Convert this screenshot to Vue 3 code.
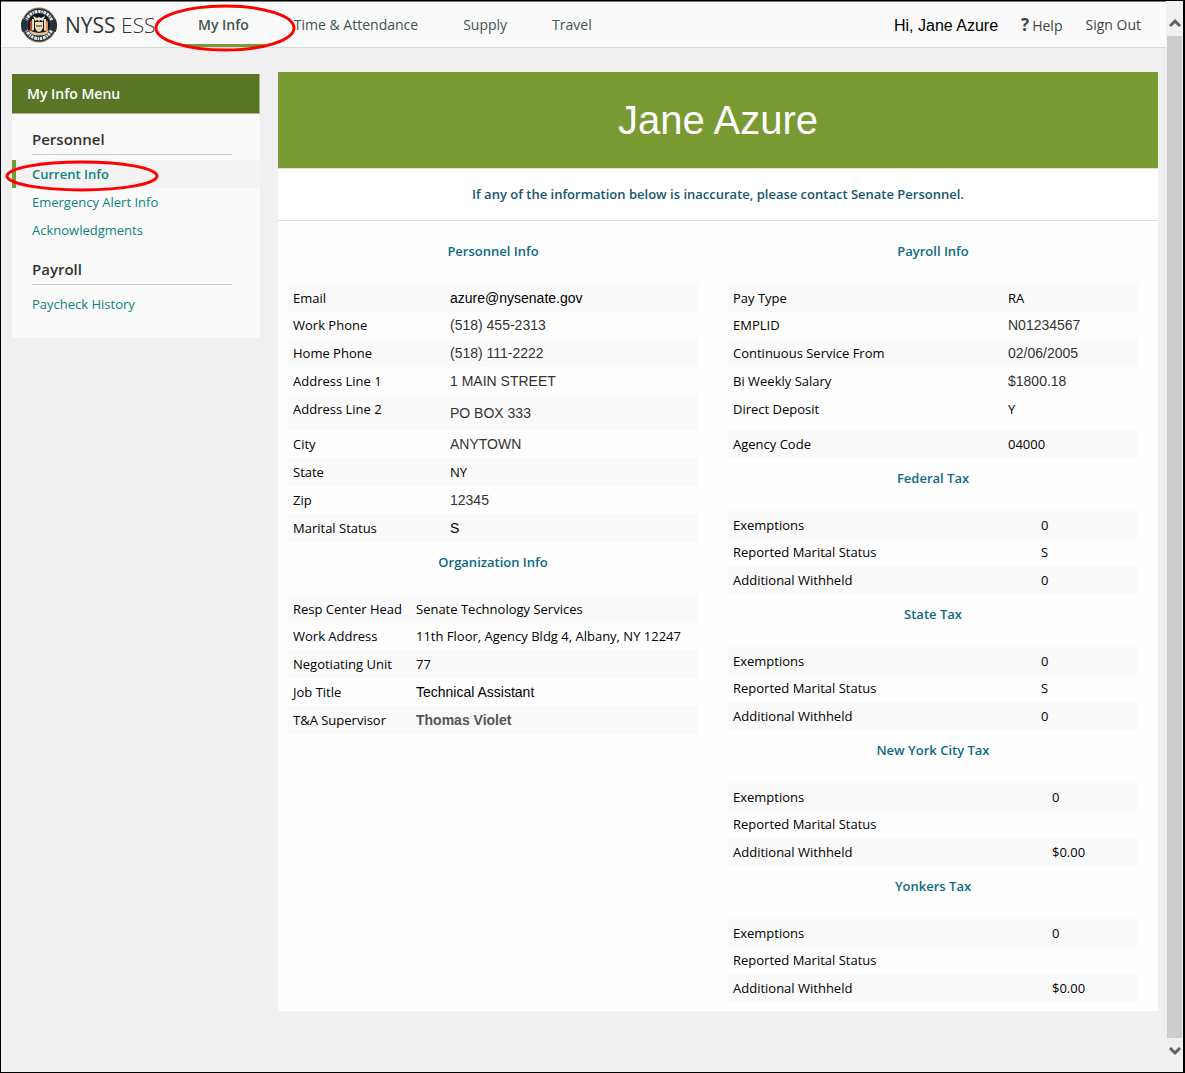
<script setup>
const nav = [
  { label: 'My Info', active: true },
  { label: 'Time & Attendance' },
  { label: 'Supply' },
  { label: 'Travel' }
]

const menu = [
  {
    title: 'Personnel',
    links: [
      { label: 'Current Info', active: true },
      { label: 'Emergency Alert Info' },
      { label: 'Acknowledgments' }
    ]
  },
  { title: 'Payroll', links: [{ label: 'Paycheck History' }] }
]

const columns = [
  [
    {
      title: 'Personnel Info',
      size: 'personal',
      rows: [
        { label: 'Email', value: 'azure@nysenate.gov', tone: 'alt' },
        { label: 'Work Phone', value: '(518) 455-2313', tone: 'alt soft' },
        { label: 'Home Phone', value: '(518) 111-2222', tone: 'alt soft' },
        { label: 'Address Line 1', value: '1 MAIN STREET', tone: 'alt soft' },
        { label: 'Address Line 2', value: 'PO BOX 333', tone: 'alt soft', tall: true },
        { label: 'City', value: 'ANYTOWN', tone: 'alt soft', plain: true },
        { label: 'State', value: 'NY', striped: true },
        { label: 'Zip', value: '12345', tone: 'alt soft', plain: true },
        { label: 'Marital Status', value: 'S', tone: 'alt', striped: true }
      ]
    },
    {
      title: 'Organization Info',
      size: 'organization',
      rows: [
        { label: 'Resp Center Head', value: 'Senate Technology Services' },
        { label: 'Work Address', value: '11th Floor, Agency Bldg 4, Albany, NY 12247' },
        { label: 'Negotiating Unit', value: '77' },
        { label: 'Job Title', value: 'Technical Assistant', tone: 'alt' },
        { label: 'T&A Supervisor', value: 'Thomas Violet', tone: 'alt strong' }
      ]
    }
  ],
  [
    {
      title: 'Payroll Info',
      size: 'payroll',
      rows: [
        { label: 'Pay Type', value: 'RA' },
        { label: 'EMPLID', value: 'N01234567', tone: 'alt soft' },
        { label: 'Continuous Service From', value: '02/06/2005', tone: 'alt soft' },
        { label: 'Bi Weekly Salary', value: '$1800.18', tone: 'alt soft' },
        { label: 'Direct Deposit', value: 'Y', tall: true, plain: true, top: true },
        { label: 'Agency Code', value: '04000', striped: true }
      ]
    },
    {
      title: 'Federal Tax',
      size: 'tax',
      rows: [
        { label: 'Exemptions', value: '0' },
        { label: 'Reported Marital Status', value: 'S' },
        { label: 'Additional Withheld', value: '0' }
      ]
    },
    {
      title: 'State Tax',
      size: 'tax',
      rows: [
        { label: 'Exemptions', value: '0' },
        { label: 'Reported Marital Status', value: 'S' },
        { label: 'Additional Withheld', value: '0' }
      ]
    },
    {
      title: 'New York City Tax',
      size: 'local',
      rows: [
        { label: 'Exemptions', value: '0' },
        { label: 'Reported Marital Status', value: '' },
        { label: 'Additional Withheld', value: '$0.00' }
      ]
    },
    {
      title: 'Yonkers Tax',
      size: 'local',
      rows: [
        { label: 'Exemptions', value: '0' },
        { label: 'Reported Marital Status', value: '' },
        { label: 'Additional Withheld', value: '$0.00' }
      ]
    }
  ]
]

const isStriped = (row, index) => row.striped || (!row.plain && index % 2 === 0)
</script>

<template>
  <div class="frame">
    <div class="page">
      <header class="topbar">
        <a class="brand" href="#">
          <svg class="seal" viewBox="0 0 36 36" aria-hidden="true">
            <circle cx="18" cy="18" r="17.5" fill="#9a8455" />
            <circle cx="18" cy="18" r="16.5" fill="#26333f" />
            <circle cx="18" cy="18" r="13.6" fill="none" stroke="#e4e6e2" stroke-width="3" stroke-dasharray="2.4 .8 1.4 .7 2.8 .9" pathLength="85" />
            <path d="M4 13q-2 5 0 11M32 13q2 5 0 11" fill="none" stroke="#26333f" stroke-width="6" />
            <circle cx="18" cy="18" r="11" fill="#11171c" />
            <path d="M8 23q10 6 20 0l-2 4q-8 3-16 0z" fill="#d9c79b" />
            <path d="M9 15l2-2 2 3v8H9z" fill="#b9452e" />
            <path d="M23 16l2-3 2 2v9h-4z" fill="#d58a57" />
            <path d="M11 12h2v11h-2zM23 12h2v11h-2z" fill="#e8d7b5" />
            <path d="M14 15h8v6q-1 3-4 4-3-1-4-4z" fill="#e6ddbd" />
            <path d="M15 18h6v2h-6z" fill="#b57a35" />
            <path d="M12 9l4 2 2-1 2 1 4-2-2 5-3-1-1 2-1-2-3 1z" fill="#e9e4d3" />
          </svg>
          <span class="brand-name">NYSS <span class="brand-light">ESS</span></span>
        </a>
        <nav class="nav" aria-label="Main">
          <a v-for="item in nav" :key="item.label" href="#" class="nav-link" :class="{ active: item.active }">
            {{ item.label }}
            <svg v-if="item.active" class="ring ring-nav" viewBox="0 0 142 48" aria-hidden="true">
              <ellipse cx="71" cy="24" rx="69" ry="22" />
            </svg>
          </a>
        </nav>
        <div class="account">
          <span class="greeting">Hi, Jane Azure</span>
          <a class="help" href="#"><b>?</b>Help</a>
          <a class="sign-out" href="#">Sign Out</a>
        </div>
      </header>

      <div class="body">
        <aside class="sidebar">
          <h2>My Info Menu</h2>
          <section v-for="group in menu" :key="group.title">
            <h3>{{ group.title }}</h3>
            <ul>
              <li v-for="link in group.links" :key="link.label" :class="{ active: link.active }">
                <a href="#">{{ link.label }}</a>
                <svg v-if="link.active" class="ring ring-menu" viewBox="0 0 154 32" aria-hidden="true">
                  <ellipse cx="77" cy="16" rx="75" ry="14" />
                </svg>
              </li>
            </ul>
          </section>
        </aside>

        <main class="content">
          <h1>Jane Azure</h1>
          <p class="notice">If any of the information below is inaccurate, please contact Senate Personnel.</p>
          <div class="columns">
            <div v-for="(column, c) in columns" :key="c" class="column">
              <section v-for="block in column" :key="block.title">
                <h4>{{ block.title }}</h4>
                <table :class="block.size">
                  <tbody>
                    <tr
                      v-for="(row, i) in block.rows"
                      :key="row.label"
                      :class="{ striped: isStriped(row, i), tall: row.tall, top: row.top }"
                    >
                      <th scope="row">{{ row.label }}</th>
                      <td :class="row.tone">{{ row.value }}</td>
                    </tr>
                  </tbody>
                </table>
              </section>
            </div>
          </div>
        </main>
      </div>
    </div>

    <div class="scrollbar">
      <button type="button" aria-label="Scroll up">
        <svg viewBox="0 0 12 10"><path d="M1 8l5-5 5 5" /></svg>
      </button>
      <div class="thumb"></div>
      <button type="button" aria-label="Scroll down">
        <svg viewBox="0 0 12 10"><path d="M1 2l5 5 5-5" /></svg>
      </button>
    </div>
  </div>
</template>

<style>
body {
  margin: 0;
  background: #f0f0f0;
}
</style>

<style scoped>
* {
  box-sizing: border-box;
}

.frame {
  display: flex;
  min-height: 100vh;
  border: 1px solid #000;
  border-right-width: 2px;
  background: #f0f0f0;
  font-family: "Open Sans", sans-serif;
  font-size: 13px;
  color: #000;
}

.page {
  flex: 1;
  min-width: 0;
}

a {
  color: inherit;
  text-decoration: none;
}

.topbar {
  display: flex;
  height: 47px;
  padding: 0 25px 0 20px;
  border-top: 1px solid #777;
  border-bottom: 1px solid #d8d8d8;
  background: #fafafa;
  font-size: 14px;
}

.brand {
  display: flex;
  align-items: center;
  gap: 8px;
  width: 161px;
  color: #333;
  white-space: nowrap;
}

.seal {
  width: 36px;
  height: 36px;
}

.brand-name {
  font-size: 21px;
  line-height: 44px;
}

.brand-light {
  font-weight: 300;
}

.nav {
  display: flex;
  flex: 1;
  gap: 13px;
  color: #43544f;
}

.nav-link {
  position: relative;
  padding: 0 16px;
  line-height: 45px;
  white-space: nowrap;
}

.nav-link.active {
  border-bottom: 3px solid #799933;
  font-weight: 600;
}

.ring {
  position: absolute;
  z-index: 1;
  fill: none;
  stroke: #ff0000;
  stroke-width: 3;
  pointer-events: none;
}

.ring-nav {
  top: 2px;
  left: -28px;
  width: 142px;
  height: 48px;
}

.ring-menu {
  top: 0;
  left: -11px;
  width: 154px;
  height: 32px;
}

.account {
  display: flex;
  gap: 23px;
  line-height: 45px;
  color: #444;
  white-space: nowrap;
}

.greeting {
  font: 16px/48px "Liberation Sans", sans-serif;
  color: #000;
}

.help b {
  margin-right: 3px;
  font-size: 17px;
}

.body {
  display: flex;
  align-items: flex-start;
  gap: 18px;
  padding: 24px 8px 24px 11px;
}

.sidebar {
  width: 248px;
  margin-top: 2px;
  padding-bottom: 20px;
  background: #fafafa;
}

.sidebar h2 {
  margin: 0;
  padding-left: 15px;
  border-right: 1px solid #a8b988;
  border-bottom: 1px solid #a8b988;
  background: #5b7526;
  color: #fff;
  font-size: 14px;
  font-weight: 600;
  line-height: 39px;
}

.sidebar h3 {
  margin: 0 28px 5px 20px;
  padding: 15px 0 5px;
  border-bottom: 1px solid #c8c8c8;
  color: #333;
  font-size: 15px;
  font-weight: 600;
  line-height: 20px;
}

.sidebar ul {
  margin: 0;
  padding: 0;
  list-style: none;
}

.sidebar li {
  position: relative;
  padding-left: 20px;
  color: #0b857c;
  line-height: 28px;
}

.sidebar li.active {
  padding-left: 16px;
  border-left: 4px solid #799933;
  background: #f3f3f3;
  font-weight: 600;
}

.content {
  flex: 1;
  min-width: 0;
  padding-bottom: 9px;
  background: #fefefe;
}

.content h1 {
  margin: 0;
  background: #799933;
  color: #fff;
  font: 40px/96px "Liberation Sans", sans-serif;
  text-align: center;
}

.notice {
  margin: 0;
  border-top: 1px solid #ddd;
  border-bottom: 1px solid #ddd;
  background: #fff;
  color: #155670;
  font-weight: 600;
  line-height: 51px;
  text-align: center;
}

.columns {
  display: grid;
  grid-template-columns: 1fr 1fr;
  padding-top: 10px;
}

.column {
  padding: 0 20px 0 10px;
}

.column h4 {
  margin: 0;
  padding: 10px 0 23px;
  color: #0b6b85;
  font-size: 13px;
  font-weight: 600;
  line-height: 20px;
  text-align: center;
}

table {
  width: 100%;
  border-collapse: collapse;
  table-layout: fixed;
}

th,
td {
  height: 28px;
  padding: 0 0 0 5px;
  font-weight: 400;
  line-height: 28px;
  text-align: left;
  white-space: nowrap;
}

tr:nth-child(2) th,
tr:nth-child(2) td {
  height: 27px;
  line-height: 27px;
}

tr.tall th,
tr.tall td {
  height: 35px;
}

tr.tall th,
tr.top td {
  vertical-align: top;
}

.striped {
  background: #fafafa;
}

.alt {
  font-family: "Liberation Sans", sans-serif;
  font-size: 14px;
}

.soft {
  color: #333;
}

.strong {
  color: #555;
  font-weight: 700;
}

.personal th {
  width: 157px;
}

.organization th {
  width: 123px;
}

.payroll th {
  width: 275px;
}

.tax th {
  width: 308px;
}

.local th {
  width: 319px;
}

.scrollbar {
  display: flex;
  flex-direction: column;
  width: 17px;
  padding: 0 1px;
  background: #f0f0f0;
}

.scrollbar button {
  display: flex;
  align-items: center;
  justify-content: center;
  height: 35px;
  padding: 8px 0 0;
  border: 0;
  background: none;
}

.scrollbar button:last-child {
  align-items: flex-start;
  height: 34px;
}

.scrollbar svg {
  width: 12px;
  height: 10px;
  fill: none;
  stroke: #606060;
  stroke-width: 3;
}

.thumb {
  flex: 1;
  background: #cdcdcd;
}
</style>
